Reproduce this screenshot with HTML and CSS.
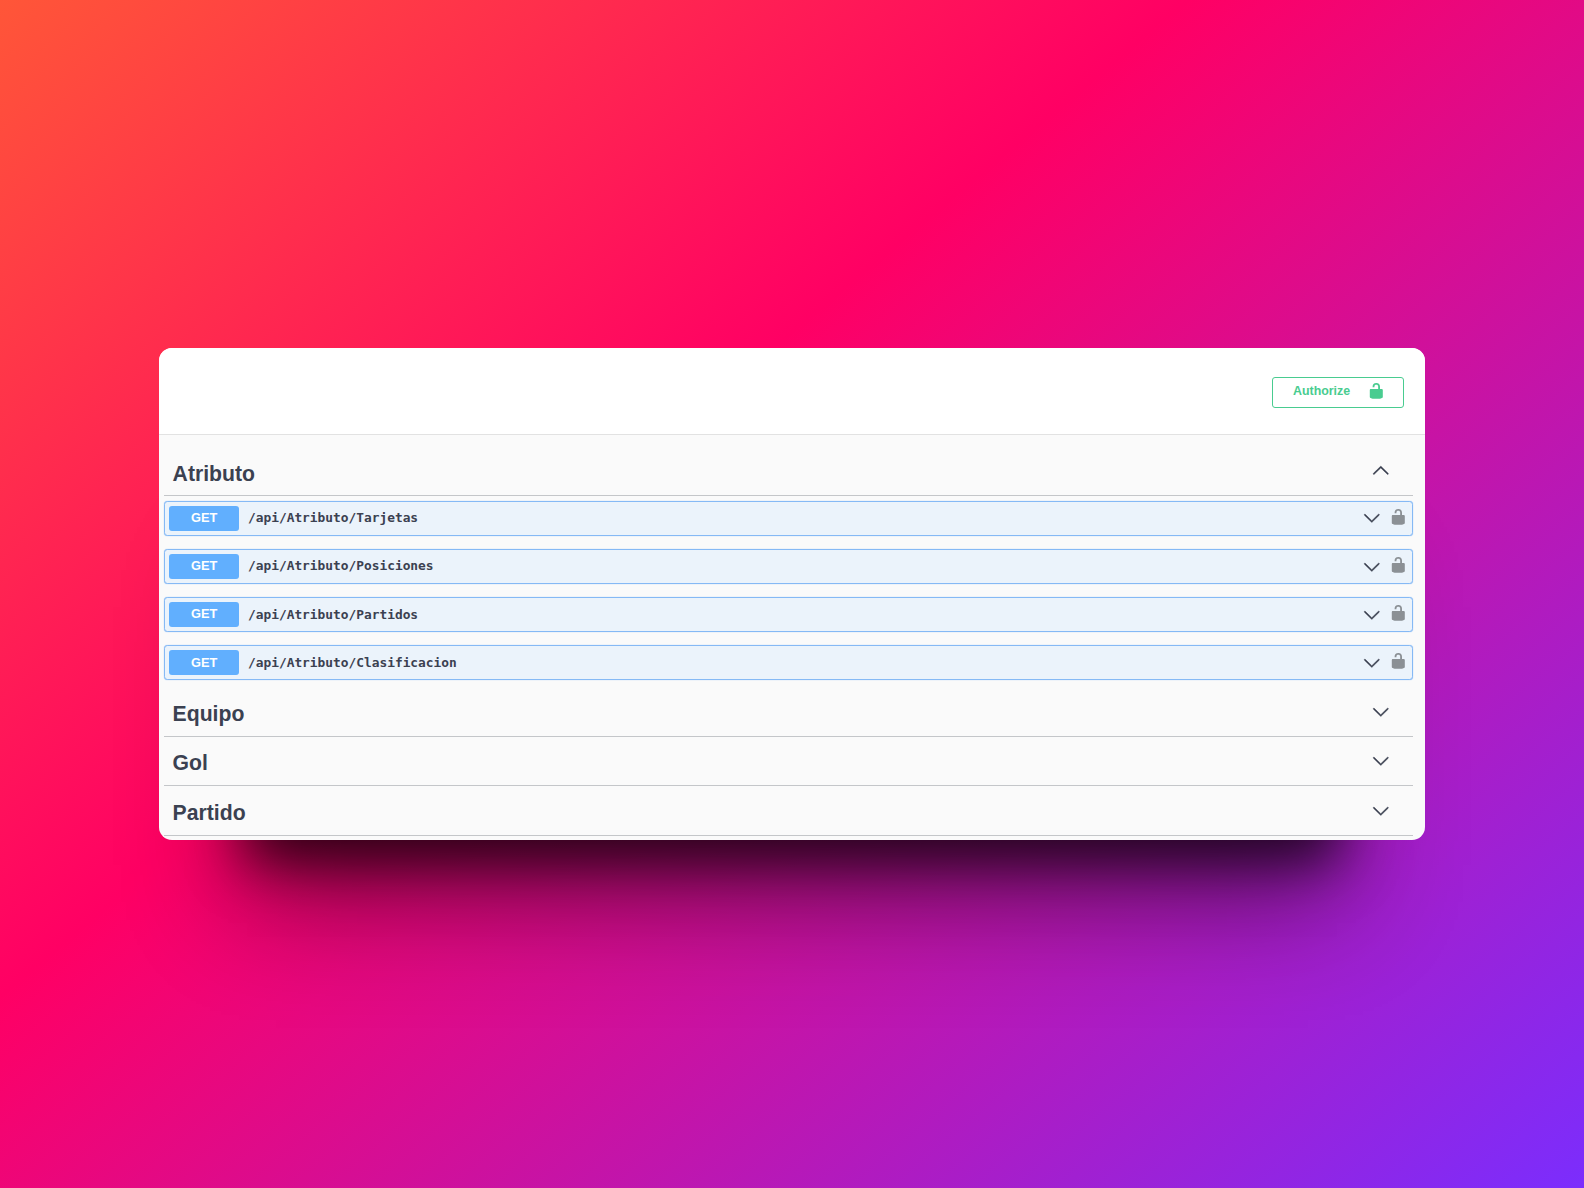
FILE: index.html
```html
<!DOCTYPE html>
<html lang="es">
<head>
<meta charset="utf-8">
<title>API</title>
<link rel="stylesheet" href="styles.css">
</head>
<body>
<svg class="defs" aria-hidden="true">
  <symbol id="unlocked" viewBox="0 0 20 20" preserveAspectRatio="none"><path d="M15.8 8H14V5.6C14 2.703 12.665 1 10 1 7.334 1 6 2.703 6 5.6V6h2v-.801C8 3.754 8.797 3 10 3c1.203 0 2 .754 2 2.199V8H4c-.553 0-1 .646-1 1.199V17c0 .549.428 1.139.951 1.307l1.197.387C5.672 18.861 6.55 19 7.1 19h5.8c.549 0 1.428-.139 1.951-.307l1.196-.387c.524-.167.953-.757.953-1.306V9.199C17 8.646 16.352 8 15.8 8z"/></symbol>
  <symbol id="chevron" viewBox="0 0 20 20"><path d="M17.418 6.109c.272-.268.709-.268.979 0s.271.701 0 .969l-7.908 7.83c-.27.268-.707.268-.979 0l-7.908-7.83c-.27-.268-.27-.701 0-.969.271-.268.709-.268.979 0L10 13.25l7.418-7.141z"/></symbol>
</svg>
<main class="card">
  <header class="topbar">
    <button class="authorize"><span>Authorize</span><svg class="lock"><use href="#unlocked"/></svg></button>
  </header>
  <div class="sections">
    <section>
      <h3 class="tag tag-open"><span>Atributo</span><svg class="chevron up"><use href="#chevron"/></svg></h3>
      <div class="operations">
        <div class="op"><span class="method">GET</span><span class="path">/api/Atributo/Tarjetas</span><svg class="chevron"><use href="#chevron"/></svg><svg class="lock"><use href="#unlocked"/></svg></div>
        <div class="op"><span class="method">GET</span><span class="path">/api/Atributo/Posiciones</span><svg class="chevron"><use href="#chevron"/></svg><svg class="lock"><use href="#unlocked"/></svg></div>
        <div class="op"><span class="method">GET</span><span class="path">/api/Atributo/Partidos</span><svg class="chevron"><use href="#chevron"/></svg><svg class="lock"><use href="#unlocked"/></svg></div>
        <div class="op"><span class="method">GET</span><span class="path">/api/Atributo/Clasificacion</span><svg class="chevron"><use href="#chevron"/></svg><svg class="lock"><use href="#unlocked"/></svg></div>
      </div>
    </section>
    <h3 class="tag"><span>Equipo</span><svg class="chevron"><use href="#chevron"/></svg></h3>
    <h3 class="tag"><span>Gol</span><svg class="chevron"><use href="#chevron"/></svg></h3>
    <h3 class="tag"><span>Partido</span><svg class="chevron"><use href="#chevron"/></svg></h3>
  </div>
</main>
</body>
</html>
```
FILE: styles.css
```css
* { box-sizing: border-box; }

body {
  margin: 0;
  height: 100vh;
  display: flex;
  align-items: center;
  justify-content: center;
  overflow: hidden;
  background: linear-gradient(140deg, #ff5638 0%, #ff0064 39.6%, #7b2dfd 100%);
  font-family: "Liberation Sans", Arial, sans-serif;
  color: #3b4151;
}

.defs { position: absolute; width: 0; height: 0; }

.card {
  width: 1266px;
  height: 492px;
  border-radius: 13px;
  overflow: hidden;
  background: #fafafa;
  box-shadow:
    0 142px 104px -80px rgba(0, 0, 0, .46),
    0 108px 52px -88px rgba(0, 0, 0, .7);
}

.topbar {
  height: 87px;
  padding: 28.5px 21px 0 0;
  display: flex;
  justify-content: flex-end;
  align-items: flex-start;
  background: #fff;
  border-bottom: 1px solid #e2e2e2;
}

.authorize {
  width: 132px;
  height: 31.5px;
  padding: 0 17px 2px 20px;
  display: flex;
  align-items: center;
  justify-content: space-between;
  background: transparent;
  border: 1px solid #49cc90;
  border-radius: 3px;
  color: #49cc90;
  font: bold 12.4px "Liberation Sans", Arial, sans-serif;
}

.lock { width: 18.6px; height: 17.6px; flex: none; }
.authorize .lock { fill: #49cc90; }

.chevron {
  width: 17.6px;
  height: 17.6px;
  flex: none;
  fill: #3b4151;
  stroke: #3b4151;
  stroke-width: .5;
}
.up { transform: rotate(180deg); }

.sections { padding: 12.2px 12px 0 5px; }

.tag {
  margin: 0;
  height: 49.3px;
  padding: 0 23.6px 0 8.6px;
  display: flex;
  align-items: center;
  justify-content: space-between;
  border-bottom: 1px solid #c4c6c9;
  font-size: 21.2px;
  line-height: 1;
}
.tag > span { padding-top: 3.4px; }
.tag-open { height: 48.5px; }
.tag-open > span { padding-top: 4.4px; }

.operations {
  padding: 5px 0 7.4px;
  display: flex;
  flex-direction: column;
  gap: 13px;
}

.op {
  height: 35.2px;
  padding: 0 4px;
  display: flex;
  align-items: center;
  background: #ebf3fb;
  border: 1px solid #85b9f5;
  border-radius: 3.5px;
  box-shadow: 0 0 1px #85b9f5;
}

.method {
  width: 70.4px;
  height: 25px;
  padding-bottom: 1.6px;
  display: flex;
  align-items: center;
  justify-content: center;
  background: #61affe;
  border-radius: 3px;
  color: #fff;
  font-weight: bold;
  font-size: 12.8px;
}

.path {
  flex: 1;
  padding: 0 0 1px 8.6px;
  font: bold 12.85px "DejaVu Sans Mono", monospace;
}

.op .lock { margin: -3.4px 0 0 8.6px; fill: #8b9095; }
```
